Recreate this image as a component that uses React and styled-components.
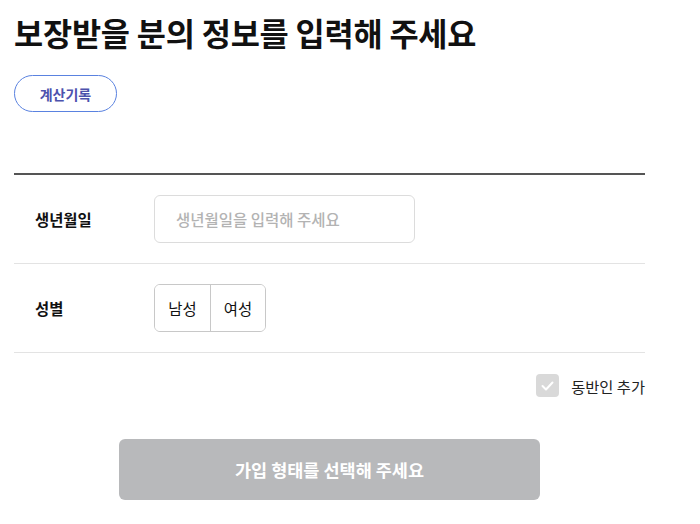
import React, { useState } from "react";
import styled, { createGlobalStyle } from "styled-components";

const Global = createGlobalStyle`
  html, body { margin: 0; padding: 0; background: #fff; }
  body { font-family: "Noto Sans CJK KR", "Noto Sans", sans-serif; color: #111; }
  * { box-sizing: border-box; }
`;

const Page = styled.div`
  width: 631px;
  margin-left: 14px;
  padding-top: 12px;
  display: flex;
  flex-direction: column;
`;

const Title = styled.h1`
  margin: 0;
  font-size: 31.7px;
  font-weight: 700;
  line-height: 40px;
  letter-spacing: -0.2px;
  color: #111;
`;

const HistoryButton = styled.button`
  margin-top: 23px;
  align-self: flex-start;
  width: 103px;
  height: 37px;
  border: 1px solid #5a82e0;
  border-radius: 19px;
  background: #fff;
  color: #4d52ad;
  font-family: inherit;
  font-size: 14px;
  font-weight: 700;
  padding: 0;
`;

const Form = styled.div`
  margin-top: 61px;
  border-top: 2px solid #555;
`;

const Row = styled.div`
  display: flex;
  align-items: center;
  height: 89px;
  border-bottom: 1px solid #e3e3e3;
`;

const Label = styled.div`
  width: 140px;
  padding-left: 21px;
  font-size: 15.4px;
  font-weight: 700;
  color: #111;
`;

const Input = styled.input`
  width: 261px;
  height: 48px;
  border: 1px solid #dcdcdc;
  border-radius: 6px;
  padding: 0 21px;
  font-family: inherit;
  font-size: 15.5px;
  font-weight: 500;
  color: #111;
  outline: none;
  &::placeholder { color: #b3b3b3; }
`;

const Toggle = styled.div`
  display: flex;
  height: 48px;
  border: 1px solid #c8c8c8;
  border-radius: 6px;
  overflow: hidden;
`;

const ToggleItem = styled.button`
  width: ${(p) => p.$w}px;
  height: 100%;
  border: none;
  border-left: ${(p) => (p.$first ? "none" : "1px solid #c8c8c8")};
  background: #fff;
  font-family: inherit;
  font-size: 15.4px;
  color: #111;
  padding: 0;
`;

const CompanionRow = styled.label`
  margin-top: 21px;
  align-self: flex-end;
  display: flex;
  align-items: center;
  gap: 12px;
  font-size: 15.3px;
  color: #222;
`;

const CheckBox = styled.span`
  width: 23px;
  height: 23px;
  border-radius: 4px;
  background: #d9d9d9;
  display: flex;
  align-items: center;
  justify-content: center;
`;

const SubmitButton = styled.button`
  margin-top: 42px;
  margin-left: 105px;
  width: 421px;
  height: 61px;
  border: none;
  border-radius: 6px;
  background: #b8b9bb;
  color: #fff;
  font-family: inherit;
  font-size: 17.5px;
  font-weight: 700;
`;

export default function App() {
  const [gender, setGender] = useState(null);
  return (
    <>
      <Global />
      <Page>
        <Title>보장받을 분의 정보를 입력해 주세요</Title>
        <HistoryButton>계산기록</HistoryButton>
        <Form>
          <Row>
            <Label>생년월일</Label>
            <Input placeholder="생년월일을 입력해 주세요" />
          </Row>
          <Row>
            <Label>성별</Label>
            <Toggle>
              <ToggleItem $first $w={55} onClick={() => setGender("m")}>남성</ToggleItem>
              <ToggleItem $w={55} onClick={() => setGender("f")}>여성</ToggleItem>
            </Toggle>
          </Row>
        </Form>
        <CompanionRow>
          <CheckBox>
            <svg width="13" height="10" viewBox="0 0 13 10" fill="none">
              <path d="M1.5 5 L5 8.5 L11.5 1.5" stroke="#fff" strokeWidth="2" strokeLinecap="round" strokeLinejoin="round" />
            </svg>
          </CheckBox>
          동반인 추가
        </CompanionRow>
        <SubmitButton disabled>가입 형태를 선택해 주세요</SubmitButton>
      </Page>
    </>
  );
}
